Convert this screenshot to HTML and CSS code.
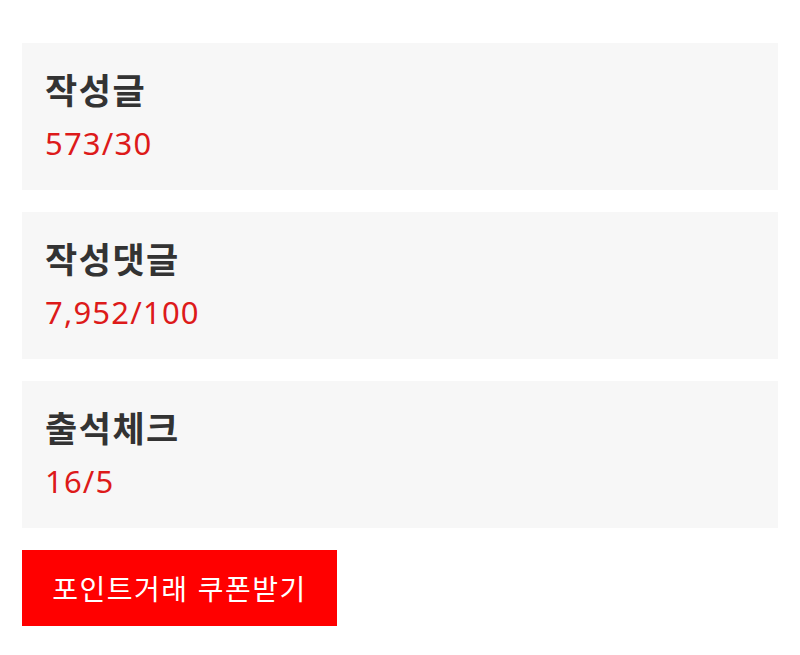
FILE: index.html
```html
<!DOCTYPE html>
<html lang="ko">
<head>
    <meta charset="UTF-8">
    <meta name="viewport" content="width=device-width, initial-scale=1.0">
    <title>쿠폰받기</title>
    <link rel="stylesheet" href="styles.css">
</head>
<body>
    <div class="wrap">
        <div class="stat">
            <div class="stat-title">작성글</div>
            <div class="stat-value">573/30</div>
        </div>
        <div class="stat">
            <div class="stat-title">작성댓글</div>
            <div class="stat-value">7,952/100</div>
        </div>
        <div class="stat">
            <div class="stat-title">출석체크</div>
            <div class="stat-value">16/5</div>
        </div>
        <button class="coupon-btn">포인트거래 쿠폰받기</button>
    </div>
</body>
</html>
```

FILE: styles.css
```css
body {
    margin: 0;
    background-color: #fff;
    font-family: "Noto Sans", "Noto Sans CJK KR", sans-serif;
}
.wrap {
    display: flex;
    flex-direction: column;
    align-items: flex-start;
    gap: 22px;
    padding: 43px 22px;
}
.stat {
    align-self: stretch;
    box-sizing: border-box;
    height: 147px;
    padding: 24px 23px 0;
    background-color: #f7f7f7;
}
.stat-title {
    font-size: 35px;
    line-height: 48px;
    font-weight: bold;
    letter-spacing: 1.5px;
    color: #333;
}
.stat-value {
    margin-top: 3px;
    font-size: 31px;
    line-height: 50px;
    letter-spacing: 1.2px;
    color: #dd1a1a;
}
.coupon-btn {
    width: 315px;
    height: 76px;
    padding: 0;
    border: none;
    background-color: #ff0000;
    color: #fff;
    font-family: "Noto Sans CJK KR", sans-serif;
    font-size: 28px;
    letter-spacing: 1.5px;
}
```
